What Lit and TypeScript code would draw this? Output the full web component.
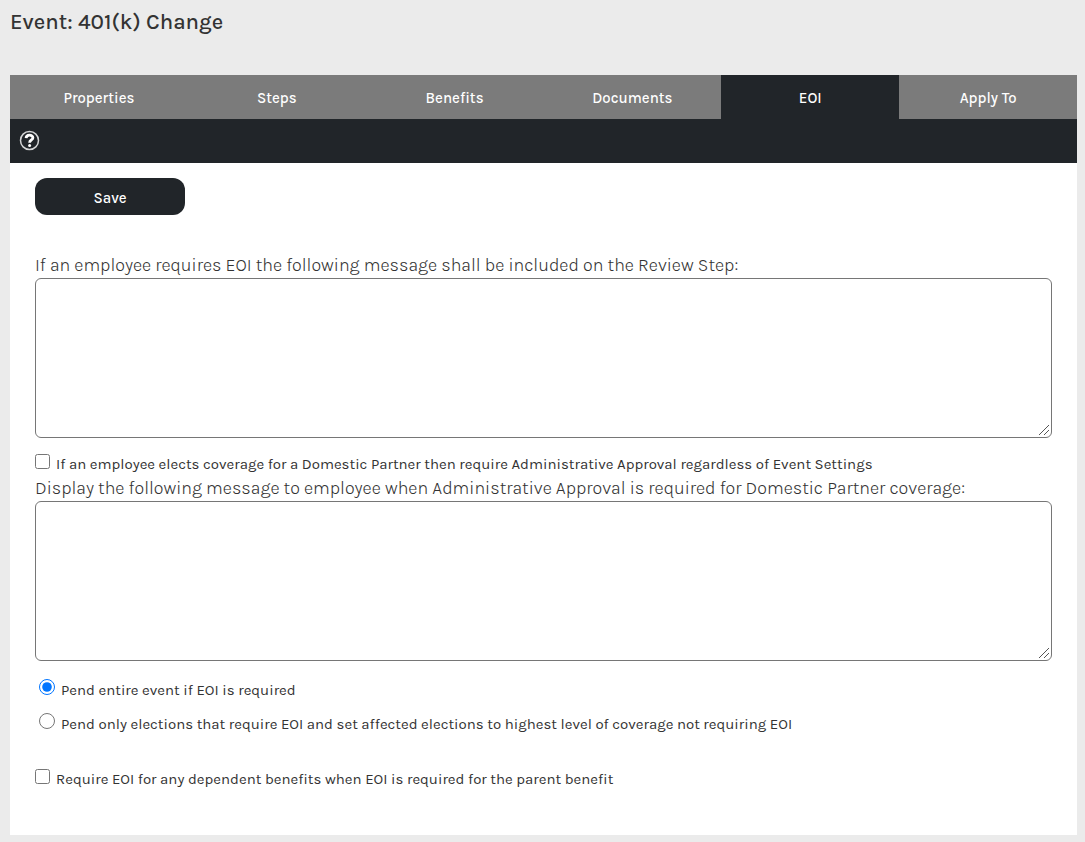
import { LitElement, html, css } from "lit";
import { customElement, state } from "lit/decorators.js";

@customElement("app-root")
export class AppRoot extends LitElement {
  static styles = css`
    :host {
      display: flex;
      flex-direction: column;
      box-sizing: border-box;
      min-height: 100vh;
      padding: 8px 8px 7px 10px;
      background: #ebebeb;
      color: #333;
      font-family: Karla, Inter, "Liberation Sans", sans-serif;
      font-weight: 400;
    }
    .title {
      margin: 0 0 39px;
      font-size: 22px;
      line-height: 28px;
      font-weight: 500;
    }
    .tabs {
      display: grid;
      grid-template-columns: repeat(6, 1fr);
      background: #7b7b7b;
    }
    .tab {
      padding: 3px 0 1px;
      font-size: 15px;
      line-height: 40px;
      font-weight: 500;
      text-align: center;
      text-decoration: none;
      color: #fff;
    }
    .active {
      background: #212529;
    }
    .toolbar {
      display: flex;
      align-items: center;
      height: 42px;
      padding: 0 9px 2px;
      background: #212529;
    }
    .help {
      display: flex;
      padding: 0;
      border: 0;
      background: none;
    }
    .panel {
      flex: 1;
      padding: 15px 25px 44px;
      background: #fff;
    }
    .save {
      display: block;
      width: 150px;
      height: 37px;
      margin: 0 0 38px;
      padding: 3px 0 0;
      border: 0;
      border-radius: 12px;
      background: #212529;
      color: #fff;
      font: inherit;
      font-size: 15px;
      font-weight: 500;
    }
    .caption {
      display: block;
      padding-bottom: 1px;
      font-size: 18px;
      line-height: 24px;
      font-weight: 300;
    }
    .message {
      display: block;
      box-sizing: border-box;
      width: 100%;
      height: 160px;
      margin: 0;
      border: 1px solid #767676;
      border-radius: 6px;
      background: #fff;
      resize: both;
    }
    .message::-webkit-resizer {
      background: url("data:image/svg+xml,%3Csvg xmlns='http://www.w3.org/2000/svg' width='15' height='15'%3E%3Cpath d='M3 13L13 3M8 13L13 8' stroke='%23555'/%3E%3C/svg%3E")
        no-repeat;
    }
    .option {
      display: flex;
      align-items: flex-start;
      font-size: 15px;
      line-height: 20px;
    }
    .box {
      width: 15px;
      height: 15px;
      margin: 0 6px 0 0;
    }
    .dot {
      width: 16px;
      height: 16px;
      margin: 0 6px 0 4px;
    }
    .domestic {
      margin-top: 16px;
      padding-bottom: 2px;
    }
    .choices {
      display: grid;
      gap: 12px;
      margin: 18px 0 34px;
      padding: 0;
      border: 0;
      }
    .choices .option {
      line-height: 22px;
    }
  `;

  @state() private pend = "event";

  private tabs = ["Properties", "Steps", "Benefits", "Documents", "EOI", "Apply To"];

  private choices = [
    { value: "event", label: "Pend entire event if EOI is required" },
    {
      value: "elections",
      label:
        "Pend only elections that require EOI and set affected elections to highest level of coverage not requiring EOI",
    },
  ];

  render() {
    return html`
      <h1 class="title">Event: 401(k) Change</h1>
      <nav class="tabs">
        ${this.tabs.map((t) => html`<a class="tab ${t === "EOI" ? "active" : ""}" href="#">${t}</a>`)}
      </nav>
      <div class="toolbar">
        <button class="help" type="button" aria-label="Help">
          <svg width="21" height="21" viewBox="0 0 21 21" fill="none" stroke="#fff">
            <circle cx="10.5" cy="10.5" r="9" stroke-width="1.5" stroke="#d4d5d6" />
            <path d="M7.1 8.1C7.2 4.2 13.9 4.2 13.9 7.8C13.9 10 10.6 10 10.6 12.8" stroke-width="2.8" />
            <circle cx="10.6" cy="15.4" r="1.5" fill="#fff" stroke="none" />
          </svg>
        </button>
      </div>
      <main class="panel">
        <button class="save" type="button">Save</button>
        <label class="caption" for="review"
          >If an employee requires EOI the following message shall be included on the Review Step:</label
        >
        <textarea class="message" id="review"></textarea>
        <label class="option domestic">
          <input class="box" type="checkbox" />
          <span>If an employee elects coverage for a Domestic Partner then require Administrative Approval regardless of Event Settings</span>
        </label>
        <label class="caption" for="partner"
          >Display the following message to employee when Administrative Approval is required for Domestic Partner coverage:</label
        >
        <textarea class="message" id="partner"></textarea>
        <fieldset class="choices" aria-label="Pending behaviour">
          ${this.choices.map(
            (c) => html`<label class="option">
              <input
                class="dot"
                type="radio"
                name="pend"
                .checked=${this.pend === c.value}
                @change=${() => (this.pend = c.value)}
              />
              <span>${c.label}</span>
            </label>`
          )}
        </fieldset>
        <label class="option">
          <input class="box" type="checkbox" />
          <span>Require EOI for any dependent benefits when EOI is required for the parent benefit</span>
        </label>
      </main>
    `;
  }
}
